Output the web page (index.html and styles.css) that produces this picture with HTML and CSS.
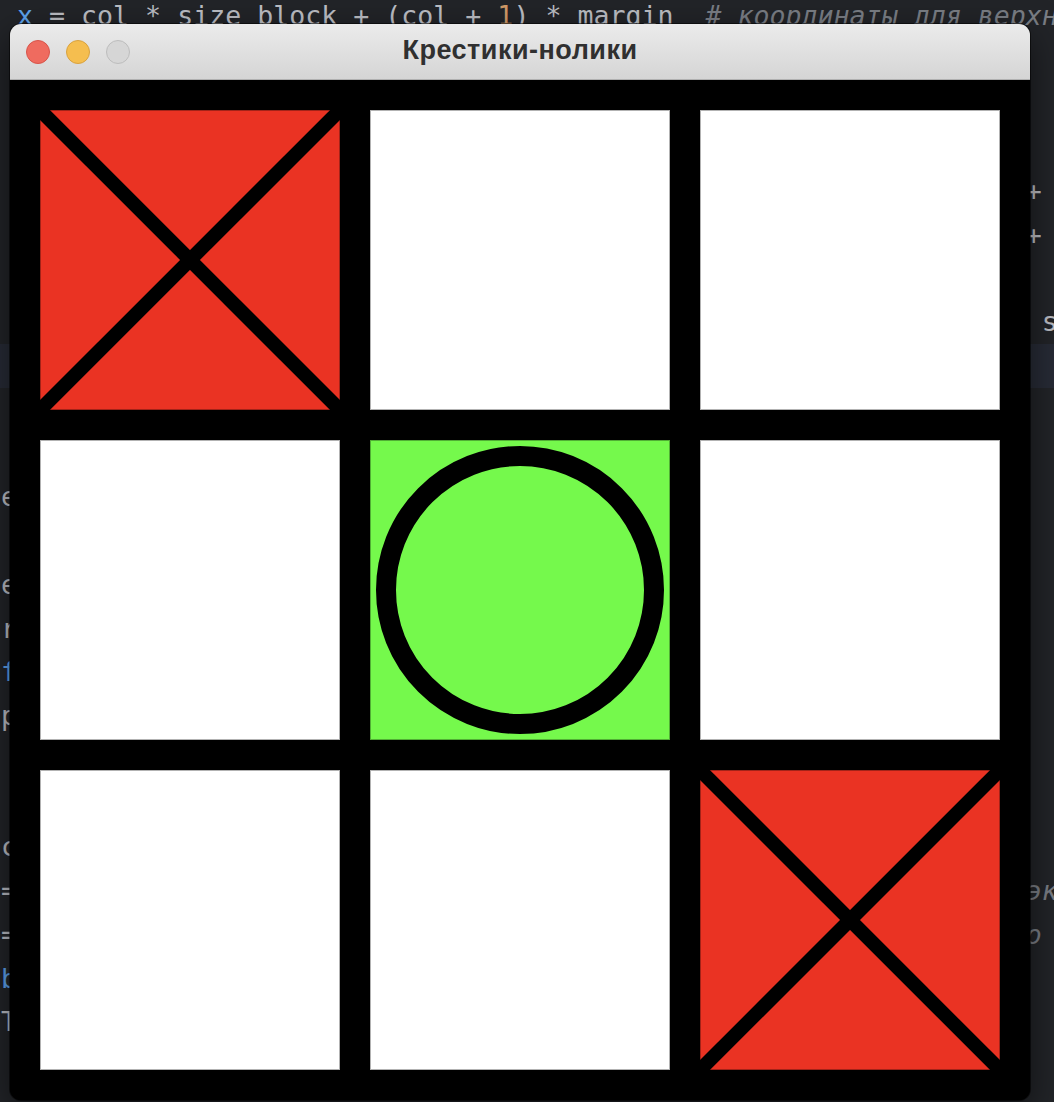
FILE: index.html
```html
<!DOCTYPE html>
<html lang="ru">
<head>
<meta charset="utf-8">
<title>Крестики-нолики</title>
<link rel="stylesheet" href="styles.css">
</head>
<body>
<div class="editor">
  <div class="line"> <span class="var">x</span> = col * size_block + (col + <span class="num">1</span>) * margin  <span class="cmt"># координаты для верхнего левого угла</span></div>
  <div class="line">    y = row * size_block + (row + 1) * margin</div>
  <div class="line">    if mas[row][col] == 'x':</div>
  <div class="line">        color = red</div>
  <div class="line"><span class="to64">        pygame.draw.line(screen, black, (x, y), (x</span>+ size_block, y</div>
  <div class="line"><span class="to64">        pygame.draw.line(screen, black, (x, y + size_block), (x</span>+ size_block, y), 14)</div>
  <div class="line">    elif mas[row][col] == 'o':</div>
  <div class="line"><span class="to64">        color = green</span> size_block // 2), 20)</div>
  <div class="line current">    pygame.draw.rect(screen, color, (x, y))</div>
  <div class="line"></div>
  <div class="line"></div>
  <div class="line">event in pygame.event.get():</div>
  <div class="line"></div>
  <div class="line">event.type == pygame.QUIT:</div>
  <div class="line">row = y_mouse // (size_block + margin)</div>
  <div class="line"><span class="var">f</span>or row in range(3):</div>
  <div class="line">print(mas)</div>
  <div class="line"></div>
  <div class="line"></div>
  <div class="line">col = x_mouse // (size_block + margin)</div>
  <div class="line"><span class="to64">= pygame.display.set_mode(size)</span><span class="cmt">экран</span></div>
  <div class="line"><span class="to64">= 'x'</span><span class="cmt">о</span></div>
  <div class="line"><span class="var">b</span>reak</div>
  <div class="line">Т</div>
  <div class="line"></div>
</div>

<div class="window">
  <div class="titlebar">
    <div class="lights">
      <span class="light close"></span>
      <span class="light minimize"></span>
      <span class="light zoom"></span>
    </div>
    <div class="title">Крестики-нолики</div>
    <div class="spacer"></div>
  </div>
  <div class="board">
    <div class="cell cross">
      <svg class="mark" viewBox="0 0 300 300" width="300" height="300"><line x1="0" y1="0" x2="300" y2="300"/><line x1="300" y1="0" x2="0" y2="300"/></svg>
    </div>
    <div class="cell empty"></div>
    <div class="cell empty"></div>
    <div class="cell empty"></div>
    <div class="cell nought">
      <svg class="mark" viewBox="0 0 300 300" width="300" height="300"><circle cx="150" cy="150" r="134"/></svg>
    </div>
    <div class="cell empty"></div>
    <div class="cell empty"></div>
    <div class="cell empty"></div>
    <div class="cell cross">
      <svg class="mark" viewBox="0 0 300 300" width="300" height="300"><line x1="0" y1="0" x2="300" y2="300"/><line x1="300" y1="0" x2="0" y2="300"/></svg>
    </div>
  </div>
</div>
</body>
</html>
```

FILE: styles.css
```css
html, body {
  margin: 0;
  padding: 0;
  width: 1054px;
  height: 1102px;
  overflow: hidden;
  background: #222428;
}

.editor {
  margin-top: -6px;
  padding-left: 1px;
  font-family: "DejaVu Sans Mono", "Liberation Mono", monospace;
  font-size: 26.6px;
  color: #bcbec4;
}

.line {
  height: 43.75px;
  line-height: 43.75px;
  white-space: pre;
}

.line.current {
  background: #272b36;
  margin-left: -1px;
  padding-left: 1px;
}

.to64 {
  display: inline-block;
  width: 64ch;
  overflow: hidden;
  vertical-align: top;
}

.var { color: #5da3ee; }
.num { color: #d29b67; }
.cmt { color: #7a7e85; font-style: italic; }

.window {
  position: absolute;
  left: 10px;
  top: 24px;
  width: 1020px;
  border-radius: 11px;
  overflow: hidden;
  background: #000;
  box-shadow: 0 0 0 1px rgba(0, 0, 0, 0.55), 0 12px 36px rgba(0, 0, 0, 0.55);
}

.titlebar {
  height: 55px;
  border-bottom: 1px solid #b0b0b0;
  background: linear-gradient(#ebebeb, #d5d5d5);
  display: grid;
  grid-template-columns: 1fr auto 1fr;
  align-items: center;
}

.lights {
  display: flex;
  gap: 16px;
  padding-left: 16px;
}

.light {
  width: 22px;
  height: 22px;
  border-radius: 50%;
  border: 1px solid;
}

.light.close { background: #ef6b5f; border-color: #d8544a; }
.light.minimize { background: #f5be4f; border-color: #d9a23f; }
.light.zoom { background: #d6d6d6; border-color: #bdbdbd; }

.title {
  font-family: "Liberation Sans", Arial, sans-serif;
  font-weight: bold;
  font-size: 27px;
  line-height: 1;
  color: #303030;
  letter-spacing: 0.5px;
  padding-bottom: 2px;
}

.board {
  background: #000;
  padding: 30px;
  display: grid;
  grid-template-columns: repeat(3, 300px);
  grid-auto-rows: 300px;
  gap: 30px;
}

.cell {
  box-shadow: inset 0 0 0 1px rgba(0, 0, 0, 0.3);
}

.cell.empty { background: #ffffff; }
.cell.cross { background: #ea3323; }
.cell.nought { background: #75f94c; }

.mark {
  display: block;
}

.mark line {
  stroke: #000;
  stroke-width: 14;
}

.mark circle {
  fill: none;
  stroke: #000;
  stroke-width: 20;
}
```
